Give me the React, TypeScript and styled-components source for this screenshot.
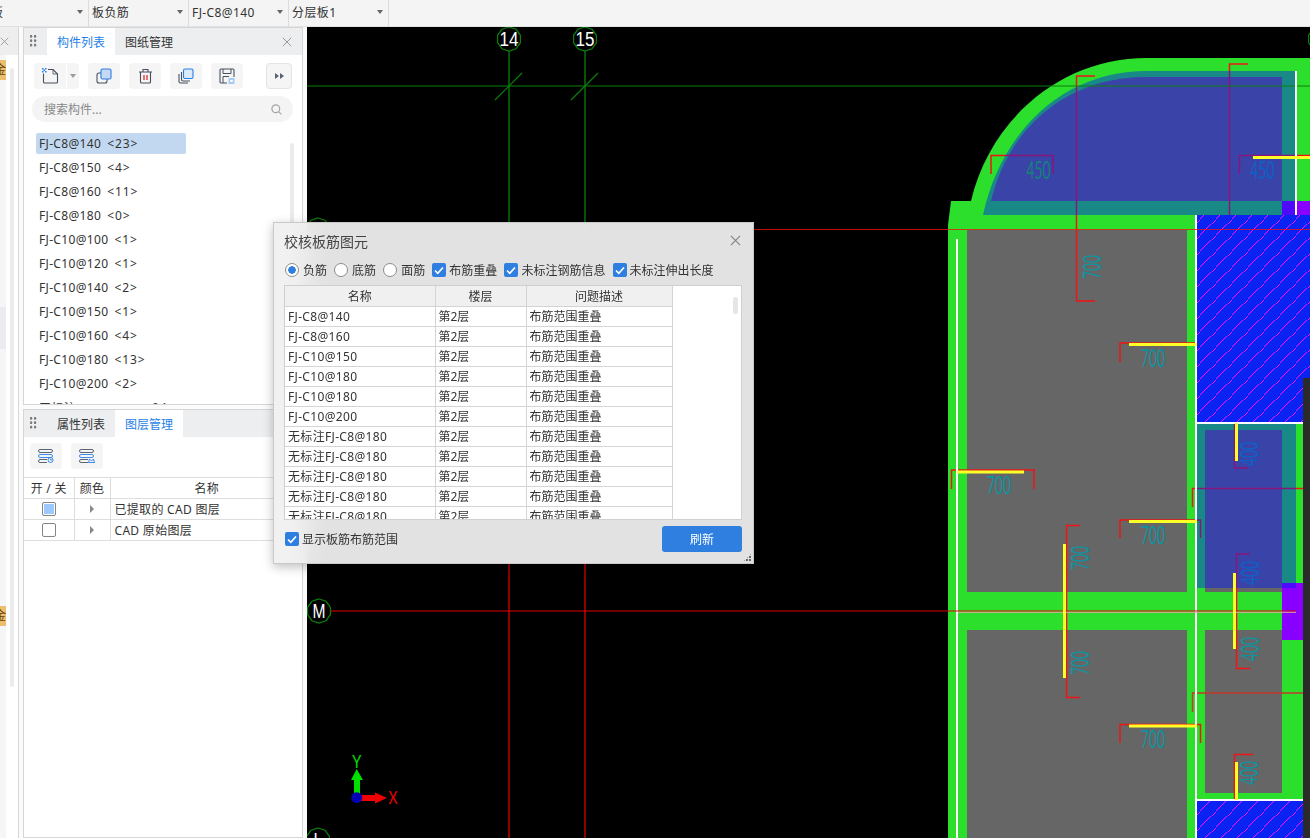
import React from "react";
import styled, { createGlobalStyle } from "styled-components";

const GlobalStyle = createGlobalStyle`
  html, body {
    margin: 0;
    padding: 0;
    width: 1310px;
    height: 838px;
    overflow: hidden;
    background: #fff;
    font-family: "Noto Sans", "Noto Sans CJK SC", sans-serif;
    color: #333;
  }
  * { box-sizing: border-box; }
`;

const Page = styled.div`
  position: relative;
  width: 1310px;
  height: 838px;
  overflow: hidden;
  display: flex;
  flex-direction: column;
`;

const TopBar = styled.div`
  display: flex;
  height: 27px;
  flex: none;
  background: #f4f4f4;
  border-bottom: 1px solid #e2e2e2;
`;

const Segment = styled.div<{ $first?: boolean }>`
  width: ${({ $first }) => ($first ? "89px" : "100px")};
  display: flex;
  align-items: center;
  justify-content: space-between;
  padding: 0 5px 2px ${({ $first }) => ($first ? "0" : "3px")};
  border-right: 1px solid #dcdcdc;
  font-size: 12px;
  letter-spacing: 0.4px;
  overflow: hidden;
`;

const ClippedLabel = styled.span`
  margin-left: -9px;
`;

const Caret = styled.i`
  width: 0;
  height: 0;
  border-left: 3.5px solid transparent;
  border-right: 3.5px solid transparent;
  border-top: 4px solid #666;
`;

const Workspace = styled.div`
  flex: 1;
  display: flex;
  min-height: 0;
  background: #fbfbfb;
`;

const LeftStub = styled.div`
  position: relative;
  width: 19px;
  border-right: 1px solid #d6d6d6;
  background: #fff;
  display: flex;
  flex-direction: column;
`;

const StubHeader = styled.div`
  height: 28px;
  flex: none;
  background: #eeeeef;
  display: flex;
  align-items: center;
  padding-left: 0;
`;

const StubColumn = styled.div`
  width: 6px;
  flex: 1;
  background: #f5f6f8;
  display: flex;
  flex-direction: column;
`;

const StubTag = styled.div<{ $top: number }>`
  height: 20px;
  margin-top: ${({ $top }) => $top}px;
  width: 6px;
  flex: none;
  overflow: hidden;
  background: #ecc06a;
  color: #6a3b08;
  font-size: 12px;
  line-height: 20px;
  text-indent: -6px;
  white-space: nowrap;
`;

const StubSelected = styled.div`
  height: 42px;
  margin-top: 227px;
  flex: none;
  background: #ebecf0;
`;

const StubScroll = styled.div`
  position: absolute;
  left: 10px;
  top: 41px;
  width: 4px;
  height: 619px;
  border-radius: 2px;
  background: #ebebeb;
`;

const Panels = styled.div`
  width: 280px;
  margin-left: 4px;
  margin-right: 4px;
  display: flex;
  flex-direction: column;
  gap: 4px;
  flex: none;
`;

const Panel = styled.section<{ $fill?: boolean }>`
  position: relative;
  background: #fff;
  border: 1px solid #d6d6d6;
  height: ${({ $fill }) => ($fill ? "auto" : "378px")};
  flex: ${({ $fill }) => ($fill ? 1 : "none")};
  overflow: hidden;
  display: flex;
  flex-direction: column;
`;

const PanelHeader = styled.div`
  height: 27px;
  flex: none;
  background: #edeef0;
  display: flex;
  align-items: stretch;
  padding-left: 6px;
`;

const Grip = styled.span`
  width: 7px;
  margin: 7px 10px 7px 0;
  background-image: radial-gradient(circle at 1.2px 1.2px, #7d7d7d 1.2px, transparent 1.4px);
  background-size: 4px 4.4px;
`;

const Tab = styled.div<{ $active?: boolean }>`
  width: 68px;
  display: flex;
  align-items: center;
  justify-content: center;
  font-size: 12px;
  background: ${({ $active }) => ($active ? "#fff" : "transparent")};
  color: ${({ $active }) => ($active ? "#1f7fe6" : "#333")};
`;

const HeaderClose = styled.button`
  margin-left: auto;
  width: 30px;
  padding: 0;
  border: none;
  background: none;
  display: flex;
  align-items: center;
  justify-content: center;
`;

const Toolbar = styled.div`
  display: flex;
  gap: 9px;
  margin: 8px 0 0 10px;
  height: 26px;
  flex: none;
`;

const LowerToolbar = styled(Toolbar)`
  margin: 6px 0 0 6px;
`;

const ToolButton = styled.button`
  width: 32px;
  height: 26px;
  padding: 0;
  border: none;
  border-radius: 4px;
  background: #f5f5f5;
  display: flex;
  align-items: center;
  justify-content: center;
`;

const SplitButton = styled.div`
  width: 45px;
  height: 26px;
  border-radius: 4px;
  background: #f5f5f5;
  display: flex;
  align-items: center;
`;

const SplitMain = styled.span`
  width: 33px;
  height: 26px;
  border-right: 1px solid #fff;
  display: flex;
  align-items: center;
  justify-content: center;
`;

const SplitArrow = styled.span`
  flex: 1;
  display: flex;
  justify-content: center;
`;

const SmallCaret = styled(Caret)`
  border-top-color: #9a9a9a;
`;

const MoreButton = styled(ToolButton)`
  width: 26px;
  margin-left: 14px;
  border: 1px solid #e4e4e4;
`;

const SearchBox = styled.div`
  width: 261px;
  height: 26px;
  margin: 7px 0 0 8px;
  flex: none;
  padding: 0 11px 0 12px;
  border-radius: 13px;
  background: #f4f4f4;
  display: flex;
  align-items: center;
  justify-content: space-between;
  font-size: 12px;
  color: #888;
`;

const MemberList = styled.ul`
  list-style: none;
  margin: 11px 0 0 12px;
  padding: 0;
`;

const MemberRow = styled.li<{ $selected?: boolean }>`
  width: 150px;
  height: 21px;
  margin-bottom: 3px;
  padding-left: 3px;
  display: flex;
  align-items: center;
  gap: 6px;
  border-radius: 2px;
  font-size: 12px;
  letter-spacing: 0.33px;
  white-space: nowrap;
  background: ${({ $selected }) => ($selected ? "#c1d8f0" : "transparent")};
`;

const MemberCount = styled.span`
  letter-spacing: 0.9px;
`;

const ListScroll = styled.div`
  position: absolute;
  left: 266px;
  top: 115px;
  width: 4px;
  height: 262px;
  border-radius: 2px;
  background: #ebebeb;
`;

const LayerTable = styled.table`
  width: 279px;
  margin-top: 8px;
  border-collapse: collapse;
  table-layout: fixed;
  font-size: 12px;

  th, td {
    height: 21px;
    padding: 0;
    border: 1px solid #dedede;
    font-weight: 400;
    text-align: center;
    letter-spacing: 0.3px;
  }
  th:first-child, td:first-child { border-left: none; }
  th:last-child, td:last-child { border-right: none; }
`;

const LayerName = styled.td`
  && {
    text-align: left;
    padding-left: 4px;
  }
`;

const CellInner = styled.div`
  display: flex;
  justify-content: center;
  align-items: center;
`;

const LayerCheck = styled.span<{ $on?: boolean }>`
  width: 14px;
  height: 14px;
  border: 1px solid #858585;
  border-radius: 2px;
  background: ${({ $on }) => ($on ? "#9cc8fb" : "#fff")};
  box-shadow: inset 0 0 0 1px #fff;
`;

const RightCaret = styled.i`
  width: 0;
  height: 0;
  border-top: 4px solid transparent;
  border-bottom: 4px solid transparent;
  border-left: 4px solid #888;
`;

const Canvas = styled.main`
  flex: 1;
  min-width: 0;
  background: #000;
`;

const Drawing = styled.svg`
  display: block;
`;

const Dialog = styled.div`
  position: absolute;
  left: 273px;
  top: 222px;
  width: 481px;
  height: 342px;
  display: flex;
  flex-direction: column;
  padding: 0 11px 0 10px;
  background: rgba(240, 240, 240, 0.94);
  backdrop-filter: blur(12px);
  border: 1px solid #c9c9c9;
  box-shadow: 0 3px 10px rgba(0, 0, 0, 0.25);
`;

const DialogTitle = styled.div`
  height: 37px;
  flex: none;
  padding-bottom: 2px;
  display: flex;
  align-items: center;
  justify-content: space-between;
  font-size: 14px;
  color: #444;
`;

const DialogClose = styled.button`
  padding: 0;
  border: none;
  background: none;
  display: flex;
  margin-right: 1px;
`;

const OptionRow = styled.div`
  height: 20px;
  flex: none;
  margin-left: 1px;
  display: flex;
  align-items: center;
  gap: 7.1px;
  font-size: 12px;
  color: #333;
`;

const Option = styled.label`
  display: flex;
  align-items: center;
  gap: 3px;
  white-space: nowrap;
`;

const RadioOption = styled(Option)`
  gap: 4px;
`;

const FooterOption = styled(Option)`
  margin-left: 1px;
`;

const Radio = styled.span<{ $on?: boolean }>`
  width: 14px;
  height: 14px;
  border-radius: 50%;
  border: 1px solid #8c8c8c;
  background: ${({ $on }) =>
    $on ? "radial-gradient(circle, #2e7fe0 0, #2e7fe0 3.5px, #fff 4px)" : "#fff"};
`;

const CheckBox = styled.span`
  width: 14px;
  height: 14px;
  border-radius: 2px;
  background: #2e7fe0;
  display: flex;
  align-items: center;
  justify-content: center;
`;

const TableFrame = styled.div`
  position: relative;
  width: 458px;
  height: 235px;
  margin-top: 5px;
  flex: none;
  overflow: hidden;
  background: #fff;
  border: 1px solid #cfcfcf;
`;

const IssueTable = styled.table`
  width: 387px;
  border-collapse: collapse;
  table-layout: fixed;
  font-size: 12px;

  th, td {
    height: 20px;
    padding: 0 0 0 3px;
    border: 1px solid #d4d4d4;
    border-top: none;
    font-weight: 400;
    text-align: left;
    white-space: nowrap;
    overflow: hidden;
  }
  th {
    padding: 0;
    text-align: center;
    background: #f0f0f0;
  }
  th:first-child, td:first-child { border-left: none; }
  td:first-child { letter-spacing: 0.33px; }
`;

const TableScroll = styled.div`
  position: absolute;
  left: 448px;
  top: 11px;
  width: 5px;
  height: 17px;
  border-radius: 2px;
  background: #e6e6e6;
`;

const DialogFooter = styled.div`
  flex: 1;
  display: flex;
  align-items: center;
  justify-content: space-between;
  padding: 0 0 5px;
  font-size: 12px;
`;

const RefreshButton = styled.button`
  width: 80px;
  height: 26px;
  padding: 0;
  border: none;
  border-radius: 3px;
  background: #2e7fe0;
  color: #fff;
  font-family: inherit;
  font-size: 12px;
`;

const ResizeGrip = styled.span`
  position: absolute;
  right: 1px;
  bottom: 1px;
  width: 9px;
  height: 9px;
  background-image: radial-gradient(circle at 1px 1px, #666 1px, transparent 1.1px);
  background-size: 3px 3px;
  clip-path: polygon(100% 0, 100% 100%, 0 100%);
`;

const CloseIcon = ({ size = 12, color = "#9a9a9a" }: { size?: number; color?: string }) => (
  <svg width={size} height={size} viewBox="0 0 12 12">
    <path d="M1 1 11 11M11 1 1 11" stroke={color} strokeWidth="1.2" fill="none" />
  </svg>
);

const Tick = () => (
  <svg width="10" height="9" viewBox="0 0 10 9">
    <path d="M1 4.5 3.8 7.3 9 1.5" stroke="#fff" strokeWidth="1.7" fill="none" />
  </svg>
);

const NewIcon = () => (
  <svg width="17" height="16" viewBox="0 0 17 16">
    <path d="M1.5 5.5V14a1 1 0 0 0 1 1h12a1 1 0 0 0 1-1V6L11 1.5H6" fill="none" stroke="#47505e" strokeWidth="1.1" />
    <path d="M11 1.5V6h4.5" fill="none" stroke="#47505e" strokeWidth="0.8" />
    <path d="M0 0h1.5v1.5H0zM3 0h1.5v1.5H3zM1.5 1.5H3V3H1.5zM0 3h1.5v1.5H0zM3 3h1.5v1.5H3z" fill="#2a7fe6" />
  </svg>
);

const CopyIcon = () => (
  <svg width="16" height="16" viewBox="0 0 16 16">
    <rect x="1" y="5" width="10" height="10" rx="2" fill="none" stroke="#47505e" strokeWidth="1.1" />
    <rect x="5" y="1" width="10" height="10" rx="1.5" fill="#c5d9f5" stroke="#2a7fe6" strokeWidth="1.1" />
  </svg>
);

const TrashIcon = () => (
  <svg width="15" height="16" viewBox="0 0 15 16">
    <path d="M1 4h13M5 4V1.5h5V4M2.5 4v10a1 1 0 0 0 1 1h8a1 1 0 0 0 1-1V4" fill="none" stroke="#47505e" strokeWidth="1.1" />
    <path d="M6 7v5M9 7v5" stroke="#d81e1e" strokeWidth="1.2" />
  </svg>
);

const StackIcon = () => (
  <svg width="16" height="16" viewBox="0 0 16 16">
    <path d="M1 6v7.5A1.5 1.5 0 0 0 2.5 15H10" fill="none" stroke="#47505e" strokeWidth="1.1" />
    <path d="M3.5 4v7.5A1.5 1.5 0 0 0 5 13h7" fill="none" stroke="#47505e" strokeWidth="1.1" />
    <rect x="5.5" y="1" width="9.5" height="9.5" rx="1.5" fill="#dcebfb" stroke="#2a7fe6" strokeWidth="1.1" />
  </svg>
);

const SaveIcon = () => (
  <svg width="16" height="16" viewBox="0 0 16 16">
    <path d="M8 15H2a1 1 0 0 1-1-1V2a1 1 0 0 1 1-1h12a1 1 0 0 1 1 1v7" fill="none" stroke="#47505e" strokeWidth="1.1" />
    <path d="M4 1v4.5h8V1M4 15V8.5h6" fill="none" stroke="#47505e" strokeWidth="1" />
    <rect x="9.5" y="10" width="6" height="6" fill="#a9cbf3" />
    <rect x="11.3" y="12" width="2.4" height="2" fill="#fff" />
  </svg>
);

const MoreIcon = () => (
  <svg width="9" height="6" viewBox="0 0 9 6">
    <path d="M0 0 4 3 0 6zM5 0 9 3 5 6z" fill="#5a6270" />
  </svg>
);

const SearchIcon = () => (
  <svg width="11" height="11" viewBox="0 0 11 11">
    <circle cx="4.8" cy="4.8" r="3.9" fill="none" stroke="#a5a5a5" strokeWidth="1.2" />
    <path d="M7.8 7.8 10.4 10.4" stroke="#a5a5a5" strokeWidth="1.2" />
  </svg>
);

const LayerIcon = ({ badge }: { badge: "eye" | "fold" }) => (
  <svg width="16" height="14" viewBox="0 0 16 14">
    <g fill="none" stroke="#4a5462" strokeWidth="0.9">
      <rect x="0.5" y="0.5" width="14" height="3" rx="1.5" />
    </g>
    <g fill="none" stroke="#2a7fe6" strokeWidth="0.9">
      <rect x="0.5" y="5.5" width="14" height="3" rx="1.5" />
    </g>
    <g fill="none" stroke="#4a5462" strokeWidth="0.9">
      <path d="M9 10.5H2a1.5 1.5 0 0 0 0 3h7" />
    </g>
    {badge === "eye" ? (
      <g fill="none" stroke="#2a7fe6" strokeWidth="0.9">
        <circle cx="12.5" cy="11" r="2.5" />
        <path d="M12.5 9.8V11H14" />
      </g>
    ) : (
      <path d="M10.5 10 12.5 12 14.5 10 15.5 13.5H9.5z" fill="none" stroke="#2a7fe6" strokeWidth="0.9" />
    )}
  </svg>
);

const members = [
  ["FJ-C8@140", "<23>"],
  ["FJ-C8@150", "<4>"],
  ["FJ-C8@160", "<11>"],
  ["FJ-C8@180", "<0>"],
  ["FJ-C10@100", "<1>"],
  ["FJ-C10@120", "<1>"],
  ["FJ-C10@140", "<2>"],
  ["FJ-C10@150", "<1>"],
  ["FJ-C10@160", "<4>"],
  ["FJ-C10@180", "<13>"],
  ["FJ-C10@200", "<2>"],
  ["无标注FJ-C8@180", "<94>"],
];

const issues = [
  "FJ-C8@140",
  "FJ-C8@160",
  "FJ-C10@150",
  "FJ-C10@180",
  "FJ-C10@180",
  "FJ-C10@200",
  "无标注FJ-C8@180",
  "无标注FJ-C8@180",
  "无标注FJ-C8@180",
  "无标注FJ-C8@180",
  "无标注FJ-C8@180",
];

const GRID_GREEN = "#0a800a";
const RED = "#f01414";
const YELLOW = "#ffff28";
const DIM = "#0d93a0";
const DIM_TEAL = "#12827c";
const DIM_BLUE = "#0a62c4";
const OVERLAY = "rgba(0, 23, 255, 0.43)";
const THIN_FONT = "Lato, Liberation Sans, sans-serif";

const GridBubble = ({ x, y, label, width }: { x: number; y: number; label?: string; width?: number }) => {
  const points = Array.from({ length: 10 }, (_, i) => {
    const a = (Math.PI * 2 * i) / 10 - Math.PI / 2;
    return `${x + 12 * Math.cos(a)},${y + 12 * Math.sin(a)}`;
  }).join(" ");
  return (
    <g>
      <polygon points={points} fill="#000" stroke={GRID_GREEN} strokeWidth="1.2" />
      {label && (
        <text
          x={x}
          y={y + 7}
          textAnchor="middle"
          fontFamily="Liberation Sans, sans-serif"
          fontSize="20"
          textLength={width}
          lengthAdjust="spacingAndGlyphs"
          fill="#fff"
        >
          {label}
        </text>
      )}
    </g>
  );
};

const Dim = ({
  x,
  y,
  vertical,
  label,
  color = DIM,
}: {
  x: number;
  y: number;
  vertical?: boolean;
  label: string;
  color?: string;
}) => (
  <text
    x={x}
    y={y}
    fill={color}
    fontFamily={THIN_FONT}
    fontWeight="400"
    fontSize="25"
    textLength={24}
    lengthAdjust="spacingAndGlyphs"
    textAnchor="middle"
    transform={vertical ? `rotate(-90 ${x} ${y})` : undefined}
  >
    {label}
  </text>
);

const Bracket = ({ d, color = RED }: { d: string; color?: string }) => (
  <path d={d} fill="none" stroke={color} strokeWidth="1.5" />
);

const Bar = ({ d, width = 3 }: { d: string; width?: number }) => (
  <path d={d} fill="none" stroke={YELLOW} strokeWidth={width} />
);

const CadDrawing = () => (
  <Drawing width="1003" height="811" viewBox="307 27 1003 811">
    <defs>
      <pattern id="hatch" patternUnits="userSpaceOnUse" width="16" height="16">
        <rect width="16" height="16" fill="#0a22f2" />
        <path d="M-1 12 12 -1M11 17 17 11" stroke="#ff18ff" strokeWidth="1" />
      </pattern>
    </defs>

    {/* grid lines */}
    <g strokeWidth="1.3">
      <path d="M509 27V229M585 27V229" stroke={GRID_GREEN} />
      <path d="M509 229V838M585 229V838" stroke="#d80000" />
    </g>
    <path d="M495 100 522 73M571 100 598 73M1305 100 1320 85" stroke={GRID_GREEN} strokeWidth="1.2" />

    {/* walls and rooms */}
    <path
      d="M948 838V225L951 201H971C990 120 1060 58 1147 58H1310V378H1303V838Z"
      fill="#2cdf2c"
    />
    <path d="M991 201C1005 140 1055 77 1147 77H1282V201Z" fill="#666" />
    <g shapeRendering="crispEdges">
      <rect x="967" y="230" width="220" height="362" fill="#666" />
      <rect x="967" y="630" width="220" height="208" fill="#666" />
      <rect x="1205" y="430" width="77" height="162" fill="#666" />
      <rect x="1205" y="630" width="77" height="163" fill="#666" />
      <rect x="1282" y="201" width="28" height="14" fill="#8800ff" />
      <rect x="1282" y="583" width="21" height="57" fill="#8800ff" />
      <rect x="1197" y="215" width="113" height="207" fill="url(#hatch)" />
      <rect x="1197" y="800" width="106" height="38" fill="url(#hatch)" />
    </g>

    {/* rebar brackets, these sit under the blue range overlay */}
    <Bracket d="M1095 76H1076.5V301H1095" />
    <Bracket d="M1248 64H1229.5V215" />
    <Bracket d="M991 174V155.5H1053V174" />
    <Bracket d="M1239.5 174V155.5H1310" />
    <Bracket d="M1120 362V343H1197" />
    <Bracket d="M951.5 489V470H1034V489" />
    <Bracket d="M1120 538V520H1200.5V538" />
    <Bracket d="M1080 525.5H1066.5V697.5H1080" />
    <Bracket d="M1234.5 422V468H1248" />
    <Bracket d="M1192.5 507V488.5H1303" />
    <Bracket d="M1250 554H1236.5V668.5H1250" />
    <Bracket d="M1192.5 712V693H1303" color="#c23a28" />
    <Bracket d="M1120 743V724.5H1200.5V743" />
    <Bracket d="M1253 754.5H1234.5V800" />

    {/* checked range overlay */}
    <path d="M983 215C1000 135 1060 71 1147 71H1296V215Z" fill={OVERLAY} />
    <rect x="1197" y="424" width="99" height="164" fill={OVERLAY} shapeRendering="crispEdges" />

    <Dim x={1038.5} y={179} label="450" color={DIM_TEAL} />
    <Dim x={1262.5} y={179} label="450" color={DIM_BLUE} />
    <Dim x={1153} y={367} label="700" />
    <Dim x={999} y={494} label="700" />
    <Dim x={1153} y={544} label="700" />
    <Dim x={1153} y={748} label="700" />
    <Dim x={1100.5} y={267} vertical label="700" />
    <Dim x={1089} y={558} vertical label="700" />
    <Dim x={1089} y={663} vertical label="700" />
    <Dim x={1258} y={454} vertical label="400" color={DIM_BLUE} />
    <Dim x={1259} y={573} vertical label="400" color={DIM_BLUE} />
    <Dim x={1259} y={649} vertical label="400" />
    <Dim x={1258} y={773} vertical label="400" />

    <path d="M307 86H1310" stroke={GRID_GREEN} strokeWidth="1.2" />

    {/* white wall edges */}
    <g fill="#fff" shapeRendering="crispEdges">
      <rect x="956" y="239" width="2" height="599" />
      <rect x="1195" y="215" width="2" height="623" />
      <rect x="1295" y="71" width="2" height="144" />
      <rect x="1197" y="422" width="106" height="2" />
      <rect x="1197" y="799" width="106" height="1.5" />
    </g>

    <path d="M753 229.5H1310" stroke="#f01010" strokeWidth="0.8" />
    <path d="M307 611H1296" stroke="#e00000" strokeWidth="1.2" />
    <path d="M958 612.3H1296" stroke="#e0a8a8" strokeWidth="1" />

    <Bar d="M1253 157.5H1310" />
    <Bar d="M1129 344.5H1197" />
    <Bar d="M957 472H1024" />
    <Bar d="M1129 521.5H1197" />
    <Bar d="M1129 726H1197" />
    <Bar d="M1064.5 544V678" />
    <Bar d="M1236.5 423V461" />
    <Bar d="M1234.5 573V649" />
    <Bar d="M1236.5 762V800" />

    <rect x="1303" y="378" width="7" height="460" fill="#2b2b2b" shapeRendering="crispEdges" />

    {/* axis bubbles */}
    <GridBubble x={509} y={39} label="14" width={19} />
    <GridBubble x={585} y={39} label="15" width={19} />
    <GridBubble x={1320} y={39} />
    <GridBubble x={318} y={230} />
    <GridBubble x={319} y={611} label="M" width={13} />
    <GridBubble x={318} y={840} label="L" width={9} />

    {/* coordinate gizmo */}
    <path d="M354 797V780H351L356.7 769 363 780H360V797Z" fill="#00e000" />
    <path d="M357 795H375V792.5L387 798 375 803.5V801H357Z" fill="#f00000" />
    <circle cx="356.7" cy="797.7" r="5.5" fill="#0000b4" />
    <text x="356.7" y="768" textAnchor="middle" fontFamily={THIN_FONT} fontSize="16.5" textLength={9} lengthAdjust="spacingAndGlyphs" fill="#00e000">
      Y
    </text>
    <text x="393" y="804" textAnchor="middle" fontFamily={THIN_FONT} fontSize="16.5" textLength={9} lengthAdjust="spacingAndGlyphs" fill="#f00000">
      X
    </text>
  </Drawing>
);

const App = () => {
  return (
    <Page>
      <GlobalStyle />
      <TopBar>
        <Segment $first>
          <ClippedLabel>板</ClippedLabel>
          <Caret />
        </Segment>
        <Segment>
          板负筋
          <Caret />
        </Segment>
        <Segment>
          FJ-C8@140
          <Caret />
        </Segment>
        <Segment>
          分层板1
          <Caret />
        </Segment>
      </TopBar>

      <Workspace>
        <LeftStub>
          <StubHeader>
            <CloseIcon size={9} />
          </StubHeader>
          <StubColumn>
            <StubTag $top={5}>金</StubTag>
            <StubSelected />
            <StubTag $top={257}>金</StubTag>
          </StubColumn>
          <StubScroll />
        </LeftStub>

        <Panels>
          <Panel>
            <PanelHeader>
              <Grip />
              <Tab $active>构件列表</Tab>
              <Tab>图纸管理</Tab>
              <HeaderClose>
                <CloseIcon size={10} />
              </HeaderClose>
            </PanelHeader>
            <Toolbar>
              <SplitButton>
                <SplitMain>
                  <NewIcon />
                </SplitMain>
                <SplitArrow>
                  <SmallCaret />
                </SplitArrow>
              </SplitButton>
              <ToolButton>
                <CopyIcon />
              </ToolButton>
              <ToolButton>
                <TrashIcon />
              </ToolButton>
              <ToolButton>
                <StackIcon />
              </ToolButton>
              <ToolButton>
                <SaveIcon />
              </ToolButton>
              <MoreButton>
                <MoreIcon />
              </MoreButton>
            </Toolbar>
            <SearchBox>
              搜索构件...
              <SearchIcon />
            </SearchBox>
            <MemberList>
              {members.map(([name, count], i) => (
                <MemberRow key={name} $selected={i === 0}>
                  <span>{name}</span>
                  <MemberCount>{count}</MemberCount>
                </MemberRow>
              ))}
            </MemberList>
            <ListScroll />
          </Panel>

          <Panel $fill>
            <PanelHeader>
              <Grip />
              <Tab>属性列表</Tab>
              <Tab $active>图层管理</Tab>
            </PanelHeader>
            <LowerToolbar>
              <ToolButton>
                <LayerIcon badge="eye" />
              </ToolButton>
              <ToolButton>
                <LayerIcon badge="fold" />
              </ToolButton>
            </LowerToolbar>
            <LayerTable>
              <colgroup>
                <col width="50" />
                <col width="36" />
                <col />
              </colgroup>
              <thead>
                <tr>
                  <th>开 / 关</th>
                  <th>颜色</th>
                  <th>名称</th>
                </tr>
              </thead>
              <tbody>
                <tr>
                  <td>
                    <CellInner>
                      <LayerCheck $on />
                    </CellInner>
                  </td>
                  <td>
                    <CellInner>
                      <RightCaret />
                    </CellInner>
                  </td>
                  <LayerName>已提取的 CAD 图层</LayerName>
                </tr>
                <tr>
                  <td>
                    <CellInner>
                      <LayerCheck />
                    </CellInner>
                  </td>
                  <td>
                    <CellInner>
                      <RightCaret />
                    </CellInner>
                  </td>
                  <LayerName>CAD 原始图层</LayerName>
                </tr>
              </tbody>
            </LayerTable>
          </Panel>
        </Panels>

        <Canvas>
          <CadDrawing />
        </Canvas>
      </Workspace>

      <Dialog>
        <DialogTitle>
          校核板筋图元
          <DialogClose>
            <CloseIcon size={11} color="#808080" />
          </DialogClose>
        </DialogTitle>
        <OptionRow>
          <RadioOption>
            <Radio $on />
            负筋
          </RadioOption>
          <RadioOption>
            <Radio />
            底筋
          </RadioOption>
          <RadioOption>
            <Radio />
            面筋
          </RadioOption>
          <Option>
            <CheckBox>
              <Tick />
            </CheckBox>
            布筋重叠
          </Option>
          <Option>
            <CheckBox>
              <Tick />
            </CheckBox>
            未标注钢筋信息
          </Option>
          <Option>
            <CheckBox>
              <Tick />
            </CheckBox>
            未标注伸出长度
          </Option>
        </OptionRow>
        <TableFrame>
          <IssueTable>
            <colgroup>
              <col width="150" />
              <col width="91" />
              <col width="146" />
            </colgroup>
            <thead>
              <tr>
                <th>名称</th>
                <th>楼层</th>
                <th>问题描述</th>
              </tr>
            </thead>
            <tbody>
              {issues.map((name, i) => (
                <tr key={i}>
                  <td>{name}</td>
                  <td>第2层</td>
                  <td>布筋范围重叠</td>
                </tr>
              ))}
            </tbody>
          </IssueTable>
          <TableScroll />
        </TableFrame>
        <DialogFooter>
          <FooterOption>
            <CheckBox>
              <Tick />
            </CheckBox>
            显示板筋布筋范围
          </FooterOption>
          <RefreshButton>刷新</RefreshButton>
        </DialogFooter>
        <ResizeGrip />
      </Dialog>
    </Page>
  );
};

export default App;
